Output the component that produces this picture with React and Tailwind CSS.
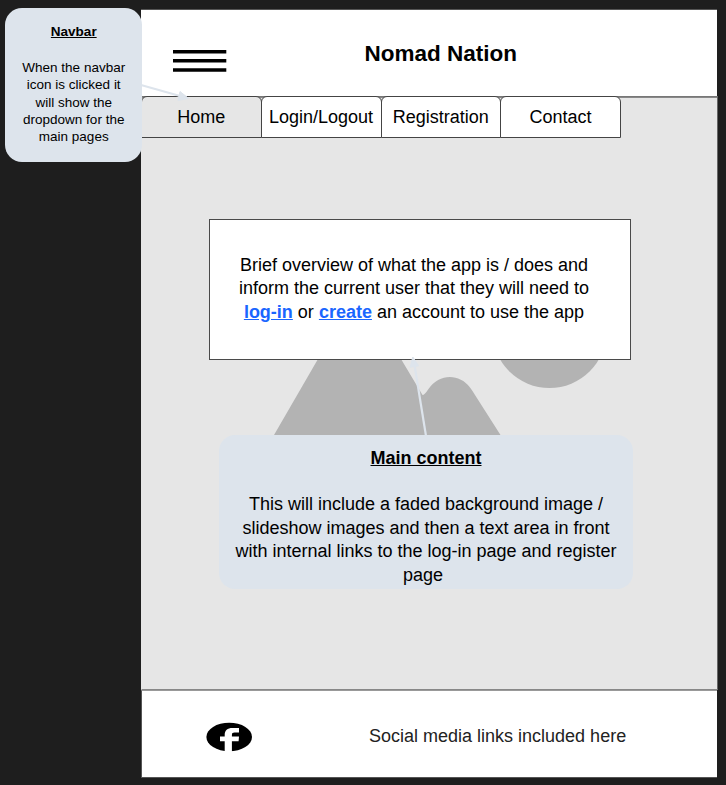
const tabs = [
  { label: "Home", style: "w-[120.5px] bg-[#e6e6e6]" },
  { label: "Login/Logout", style: "w-[121px] -ml-px bg-white" },
  { label: "Registration", style: "w-[120.5px] -ml-px bg-white" },
  { label: "Contact", style: "w-[121px] -ml-px bg-white" },
];

function Header() {
  return (
    <header className="flex h-[87px] border-t border-[#555] bg-white">
      <div className="ml-[32px] mt-[40px] h-[22px] w-[54px]">
        <svg className="block" width="54" height="22" viewBox="0 0 54 22">
          <path d="M0 1.6H53.3M0 10.8H53.3M0 20H53.3" stroke="#000" strokeWidth="3.6" />
        </svg>
      </div>
      <h1 className="ml-[137.500px] mt-[30px] text-[22.500px] leading-[28px] font-bold whitespace-nowrap">
        Nomad Nation
      </h1>
    </header>
  );
}

function TabBar() {
  return (
    <nav className="flex h-[42px]">
      {tabs.map((tab) => (
        <a
          key={tab.label}
          className={`flex items-center justify-center rounded-t-[6px] border border-[#444] text-[18px] whitespace-nowrap ${tab.style}`}
        >
          {tab.label}
        </a>
      ))}
    </nav>
  );
}

function Scenery() {
  return (
    <svg className="absolute -left-px -top-px" width="577" height="594" viewBox="141 96 577 594">
      <path
        d="M274 435L318 359H401L422.500 395Q424.500 395 428.500 389C439 373.300 459.500 373.300 470 387.500Q473 391.500 475 395L500.500 435Z"
        fill="#b3b3b3"
      />
      <circle cx="549.500" cy="331" r="57" fill="#b3b3b3" />
    </svg>
  );
}

function Arrows() {
  return (
    <svg className="absolute left-0 top-0" width="726" height="785" viewBox="0 0 726 785">
      <g stroke="#dde4ec" strokeWidth="2.2" fill="#dde4ec">
        <path d="M141 85L180 96" />
        <path d="M180 91.500L188.500 98.300L178 100.500Z" strokeWidth="1" />
        <path d="M426 436L414.500 365" />
        <path d="M412.800 357L418.500 365.800L410.200 367.200Z" strokeWidth="1" />
      </g>
    </svg>
  );
}

export default function App() {
  return (
    <div className="relative h-[785px] w-[726px] overflow-hidden bg-[#1e1e1e] pl-[141px] pt-[9px] font-['Liberation_Sans',Arial,sans-serif] text-black">
      <div className="w-[577px]">
        <div className="mr-px">
          <Header />
        </div>
        <main className="relative h-[594px] border border-[#666] border-l-[#e6e6e6] border-t-[#777] border-b-[#888] bg-[#e6e6e6] shadow-[inset_0_1px_#888]">
          <Scenery />
          <div className="relative -mt-px -ml-px">
            <TabBar />
            <section className="ml-[68px] mt-[81px] flex h-[141px] w-[422px] flex-col items-center border border-[#4a4a4a] bg-white pt-[34px] pr-[12px] text-[18px] leading-[23.400px] whitespace-nowrap">
              <p>Brief overview of what the app is / does and</p>
              <p>inform the current user that they will need to</p>
              <p>
                <a className="font-bold text-[#1a66ff] underline">log-in</a> or{" "}
                <a className="font-bold text-[#1a66ff] underline">create</a> an account to use the app
              </p>
            </section>
          </div>
        </main>
        <footer className="mr-px flex h-[88px] border-t border-b border-l border-[#555] border-t-[#999] bg-white">
          <svg className="ml-[64px] mt-[31px]" width="47" height="30" viewBox="0 0 47 30">
            <ellipse cx="23.200" cy="15" rx="22.800" ry="14.300" fill="#000" />
            <path
              d="M18.700 30V19.300H14V14.400H18.700V13C18.700 8.300 21.300 6 26.500 6H33V10.600H28.500C26.700 10.600 25.900 11.400 25.900 13V14.400H33L32.600 19.300H25.900V30Z"
              fill="#fff"
            />
          </svg>
          <p className="ml-[116px] mt-[33px] text-[18px] leading-[24px] whitespace-nowrap text-[#222]">
            Social media links included here
          </p>
        </footer>
      </div>

      <Arrows />

      <aside className="absolute left-[5px] top-[8px] h-[154px] w-[137px] rounded-[17px] bg-[#dde4ec] pt-[15px] pl-[0.500px] text-center text-[13.500px] leading-[17.300px] whitespace-nowrap">
        <h2 className="mb-[18.700px] font-bold underline">Navbar</h2>
        <p>When the navbar</p>
        <p>icon is clicked it</p>
        <p>will show the</p>
        <p>dropdown for the</p>
        <p>main pages</p>
      </aside>

      <aside className="absolute left-[219px] top-[435px] h-[154px] w-[414px] rounded-[16px] bg-[#dde4ec] pt-[12px] text-center text-[18px] leading-[23.700px] whitespace-nowrap">
        <h2 className="mb-[22.200px] font-bold underline">Main content</h2>
        <p>This will include a faded background image /</p>
        <p>slideshow images and then a text area in front</p>
        <p>with internal links to the log-in page and register</p>
        <p className="pr-[6px]">page</p>
      </aside>
    </div>
  );
}
